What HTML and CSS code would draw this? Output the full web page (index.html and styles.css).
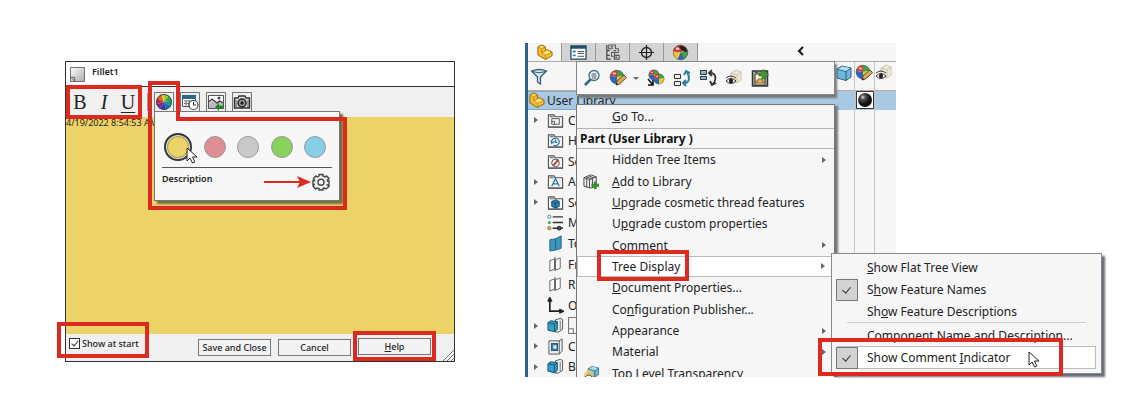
FILE: index.html
```html
<!DOCTYPE html>
<html lang="en">
<head>
<meta charset="utf-8">
<title>Comments and tree display</title>
<link rel="stylesheet" href="styles.css">
</head>
<body>
<svg class="defs" aria-hidden="true">
  <defs>
    <radialGradient id="dark" cx=".35" cy=".3" r=".7"><stop offset="0" stop-color="#ddd"/><stop offset=".25" stop-color="#555"/><stop offset=".7" stop-color="#111"/></radialGradient>
    <linearGradient id="fold" x1="0" y1="0" x2="1" y2="1"><stop offset="0" stop-color="#fff"/><stop offset="1" stop-color="#aaa"/></linearGradient>
  </defs>
  <symbol id="ball" viewBox="0 0 18 18">
    <path d="M9 9L1 8A8 8 0 0 1 9 1Z" fill="#d8372f"/><path d="M9 9V1A8 8 0 0 1 17 8Z" fill="#43a047"/><path d="M9 9L17 8A8 8 0 0 1 9 17Z" fill="#edc52f"/><path d="M9 9V17A8 8 0 0 1 1 8Z" fill="#2867bd"/><circle cx="9" cy="9" r="7.7" fill="none" stroke="#555" stroke-width=".6"/><ellipse cx="6" cy="5" rx="2" ry="1.4" fill="#fff" opacity=".6"/>
  </symbol>
  <symbol id="ballpen" viewBox="0 0 18 18">
    <use href="#ball" width="16" height="16"/><path d="M7 16l1-4 7-6 2.500 2.500-7 6.500z" fill="#d9ae62" stroke="#5c3c1c" stroke-width=".9"/><path d="M7 16l.6-2.200 1.600 1.600z" fill="#222"/>
  </symbol>
  <symbol id="display" viewBox="0 0 18 18">
    <path d="M9 9L1 8A8 8 0 0 1 5 2Z" fill="#d8372f"/><path d="M9 9L5 2A8 8 0 0 1 16 5Z" fill="#c83a32"/><path d="M7 3q5-3 9 3l1 3-5-1z" fill="#222"/><path d="M9 9L17 8A8 8 0 0 1 9 17Z" fill="#43a047"/><path d="M9 9L13 15A8 8 0 0 1 5 16Z" fill="#2867bd"/><path d="M9 9L6 16A8 8 0 0 1 1 8Z" fill="#edc52f"/><circle cx="9" cy="9" r="7.700" fill="none" stroke="#555" stroke-width=".6"/><ellipse cx="6" cy="5" rx="2" ry="1.400" fill="#fff" opacity=".7"/>
  </symbol>
  <symbol id="part" viewBox="0 0 18 18">
    <path d="M2 3l4-2 4 2v4l2-1 5 2.500v4l-7 4-8-5z" fill="#f5bd2c" stroke="#94670b"/><path d="M3 3.500L6 2l3 1.500L6 5zM7 9.500L12 7l4 2-5 3z" fill="#ffe27a"/><path d="M2 3l4 2v4l4 3v4M6 5l4-2M6 9l4-2M10 12l7-3.500" fill="none" stroke="#b98418" stroke-width=".8"/>
  </symbol>
  <symbol id="cube" viewBox="0 0 18 18"><path d="M2 5l5-3 9 2v9l-5 3.500-9-2.500z" fill="#6fb7d6" stroke="#245e7c"/><path d="M2 5l9 2.500L16 4M11 7.500v9" fill="none" stroke="#245e7c"/><path d="M3 5l4.500-2.500L15 4l-4 3z" fill="#b6deed"/></symbol>
  <symbol id="eye" viewBox="0 0 18 18"><path d="M6 4l5-3 5 2v8l-4 3-6-2z" fill="#eee8d5" stroke="#c5bda3" stroke-width=".8"/><path d="M6 4l6 2 4-3M12 6v8" fill="none" stroke="#c5bda3" stroke-width=".8"/><path d="M1 12q5-5 10 0-5 5-10 0z" fill="#fff" stroke="#333"/><circle cx="6" cy="12" r="2.200" fill="#222"/><path d="M1 9q5-4 10 0" fill="none" stroke="#333"/></symbol>
  <symbol id="folder" viewBox="0 0 18 18"><path d="M1.500 16V3h6l1 2h8v11z" fill="#f4f4f4" stroke="#555" stroke-width="1.200"/><path d="M3 5h4M1.500 16h15" stroke="#555"/></symbol>
  <symbol id="body" viewBox="0 0 18 18"><path d="M9 3l5-1.500 2.500 1V13L12 16H9z" fill="#eee" stroke="#555"/><path d="M14 4v10" stroke="#777"/><path d="M1 6l3-2 7 1v8l-3 2.500L1 14z" fill="#399cc8" stroke="#16536f"/><path d="M1 6l7 1.500L11 5M8 7.500v8" fill="none" stroke="#16536f"/></symbol>
  <symbol id="plane" viewBox="0 0 18 18"><path d="M3 5l5-2v11l-5 2zM9 4l5-2v11l-5 2z" fill="#fafafa" stroke="#666"/><path d="M8.500 1v16" stroke="#555" stroke-dasharray="3 1"/></symbol>
  <symbol id="cursor" viewBox="0 0 12 18"><path d="M1 1v13l3-3 2.500 5 2.300-1-2.300-5H11z" fill="#fff" stroke="#222"/></symbol>
  <symbol id="filter" viewBox="0 0 18 18"><path d="M1.500 3q7.500-3 15 0l-6 6v7L7.500 14V9z" fill="#d6e9f1" stroke="#345e75" stroke-width="1.300"/><path d="M2 3.500q7 2.500 14 0" fill="none" stroke="#345e75"/></symbol>
  <symbol id="props" viewBox="0 0 18 18"><path d="M1 2h16v14H1z" fill="#fff" stroke="#234c69" stroke-width="1.400"/><path d="M1 3.500h16" stroke="#234c69" stroke-width="3"/><path d="M3 7h3v2H3zM3 11h3v2H3z" fill="#2686b5"/><path d="M8 8h7M8 10h7M8 13h7" stroke="#444"/></symbol>
  <symbol id="config" viewBox="0 0 18 18"><path d="M5 1h7v4h3v4h-4v3h5v4h-5v-3H8V9h3M5 1v4h5" fill="#eee" stroke="#555" stroke-width="1.200"/><path d="M3 1v15h4M3 7h3M3 12h3" fill="none" stroke="#444" stroke-width="1.300"/><path d="M7 3h3M10 7h3M12 14h2" stroke="#444" stroke-width="1.500"/></symbol>
  <symbol id="target" viewBox="0 0 18 18"><circle cx="9" cy="9" r="5.300" fill="none" stroke="#222" stroke-width="1.400"/><path d="M9 1v16M1 9h16" stroke="#222" stroke-width="1.300"/></symbol>
  <symbol id="zoom" viewBox="0 0 18 18"><path d="M2 16l6-6" stroke="#31677e" stroke-width="2.500"/><circle cx="11" cy="6.500" r="5" fill="#edf7fb" stroke="#426f83" stroke-width="1.300"/><path d="M8.500 5h5M8.500 7h5M9 9h4" stroke="#555"/></symbol>
  <symbol id="balls" viewBox="0 0 18 18"><use href="#ball" width="12" height="12" x="1"/><use href="#ball" width="12" height="12" x="6" y="4"/><path d="M1 10l5 6M6 11v5H1" fill="none" stroke="#111" stroke-width="1.600"/></symbol>
  <symbol id="rollup" viewBox="0 0 18 18"><path d="M1.500 5.500h6v4h-6zM1.500 12.500h6v4h-6z" fill="#eee" stroke="#333"/><path d="M10 14c7 1 7-6 4-11M11 6l2-4 4 2M13 11l-3 3 3 3" fill="none" stroke="#287f9c" stroke-width="1.900"/></symbol>
  <symbol id="rolldown" viewBox="0 0 18 18"><path d="M1.500 1.500h6v4h-6zM1.500 7.500h6v3h-6z" fill="#78bfd6" stroke="#333"/><path d="M10 4c7-1 8 6 4 11M11 12l2 4 4-2M13 1l-3 3 3 3" fill="none" stroke="#333" stroke-width="1.800"/></symbol>
  <symbol id="clip" viewBox="0 0 18 18"><path d="M1.500 2h15v15h-15z" fill="#b5b29b" stroke="#333" stroke-width="1.500"/><path d="M4 5h10v11H4z" fill="#fff7cc" stroke="#333"/><path d="M5 14v-2h2v-2h4v2h2v2z" fill="#efc431" stroke="#755"/><path d="M8 4h3V1h3v3h3v3h-3v3h-3V7H8z" fill="#40a12e" stroke="#225918" stroke-width=".6"/><path d="M4 1h3v3H4z" fill="#555"/></symbol>
  <symbol id="library" viewBox="0 0 18 18"><path d="M1 5l7-3 6 2v10l-6 2-7-2z" fill="#eee" stroke="#444"/><path d="M1 5l6 2 7-3M7 7v9M4 6v9M10 6v10M3 4l6 2M6 3l5 2" fill="none" stroke="#444"/><path d="M13 9v8M9 13h8" stroke="#33902b" stroke-width="3"/></symbol>
</svg>

<main class="board">
  <section class="dialog" aria-label="Fillet1 comment">
    <header class="titlebar">
      <svg class="note-icon" viewBox="0 0 16 16"><path d="M.5.500h15v15H.5z" fill="url(#fold)" stroke="#666"/><path d="M1 11h4v4M2 12l3 3" fill="none" stroke="#555"/></svg>
      <h1>Fillet1</h1>
    </header>
    <div class="toolbar">
      <div class="styles mark">
        <button type="button" aria-label="Bold">B</button><button type="button" class="italic" aria-label="Italic">I</button><button type="button" class="under" aria-label="Underline">U</button>
      </div>
      <span class="divider"></span>
      <div class="tools">
        <button type="button" aria-label="Color"><svg viewBox="0 0 18 18"><path d="M9 9V1l5 1.500z" fill="#9ccc2d"/><path d="M9 9l5-6.500 3 5z" fill="#38a83c"/><path d="M9 9l8-1.500-1 6z" fill="#159c8e"/><path d="M9 9l7 4.500L11 17z" fill="#176bc0"/><path d="M9 9l2 8-6-1z" fill="#343a98"/><path d="M9 9l-4 7-4-5z" fill="#7e2795"/><path d="M9 9l-8 2 1-6z" fill="#c5264c"/><path d="M9 9L2 5l4-4z" fill="#e06323"/><path d="M9 9L6 1h3z" fill="#edce25"/><circle cx="9" cy="9" r="7.500" fill="none" stroke="#444"/></svg></button>
        <button type="button" aria-label="Date and time"><svg viewBox="0 0 18 18"><path d="M1.500 2.500h13v11h-13z" fill="#fff" stroke="#456"/><path d="M1 4h14" stroke="#28688a" stroke-width="4"/><path d="M3 8h9M3 10.500h6M5 7v6M8 7v6" stroke="#777"/><circle cx="12.500" cy="12" r="4.500" fill="#fff" stroke="#444" stroke-width="1.200"/><path d="M12.500 9v3H15" fill="none" stroke="#333"/></svg></button>
        <button type="button" aria-label="Image"><svg viewBox="0 0 18 18"><path d="M1.500 2.500h15v13h-15z" fill="#fff" stroke="#555"/><path d="M2 11l4-4 3 3 3-3 4 4v4H2z" fill="#bbb"/><path d="M2 9l3-3 5 4 3-2 3 2" fill="none" stroke="#333" stroke-width="1.200"/><circle cx="12" cy="5" r="1.500" fill="#444"/><path d="M8 14l4-4v2.500h5v3h-5V18z" fill="#25862d"/></svg></button>
        <button type="button" aria-label="Camera"><svg viewBox="0 0 18 18"><path d="M1.500 5H5l1-2h6l1 2h3.500v10h-15z" fill="#ddd" stroke="#333" stroke-width="1.400"/><circle cx="9" cy="10" r="4" fill="#999" stroke="#222" stroke-width="1.500"/><circle cx="9" cy="10" r="1.700" fill="#222"/><path d="M3 7v7M15 7v7" stroke="#555"/></svg></button>
      </div>
      <div class="popover">
        <div class="swatches">
          <button type="button" class="swatch yellow" aria-label="Yellow"></button><button type="button" class="swatch pink" aria-label="Pink"></button><button type="button" class="swatch gray" aria-label="Gray"></button><button type="button" class="swatch green" aria-label="Green"></button><button type="button" class="swatch blue" aria-label="Blue"></button>
          <svg class="cursor"><use href="#cursor"/></svg>
        </div>
        <div class="description">
          <span>Description</span>
          <svg class="arrow" viewBox="0 0 47 12"><path d="M0 6h36" stroke="#dc2a20" stroke-width="2"/><path d="M33 0l14 6-14 6 3-6z" fill="#dc2a20"/></svg>
          <button type="button" aria-label="Settings"><svg viewBox="0 0 18 18"><path d="M7 3V1.500h4V3l2 1 1.500-1L17 5.500 15.500 7v1H17v4h-1.500L17 13.500 14 16l-2-1-1 .5V17H7v-1.500L5 15l-1.500 1L1 13l1-1.500H1v-4h1.500L1.500 5.500 4 3l1.500 1z" fill="#eee" stroke="#444" stroke-width="1.400"/><circle cx="9" cy="9.300" r="3" fill="#fff" stroke="#444" stroke-width="1.400"/></svg></button>
        </div>
        <svg class="callout" viewBox="0 0 199 129"><path d="M2 2h28v36h167v89H2z" fill="none" stroke="#dc2a20" stroke-width="4"/></svg>
      </div>
    </div>
    <div class="comment">4/19/2022 8:54:53 AM</div>
    <footer class="footer">
      <label class="start mark"><input type="checkbox" checked><span>Show at start</span></label>
      <div class="actions"><button type="button" class="save">Save and Close</button><button type="button">Cancel</button><span class="help mark"><button type="button"><u>H</u>elp</button></span></div>
      <svg class="grip" viewBox="0 0 12 12"><path d="M1 12L12 1M5 12l7-7M9 12l3-3" stroke="#777"/></svg>
    </footer>
  </section>

  <section class="workspace" aria-label="Feature manager">
    <div class="manager">
      <nav class="tabs">
        <button type="button" class="current" aria-label="Features"><svg><use href="#part"/></svg></button><button type="button" aria-label="Properties"><svg><use href="#props"/></svg></button><button type="button" aria-label="Configurations"><svg><use href="#config"/></svg></button><button type="button" aria-label="Dimensions"><svg><use href="#target"/></svg></button><button type="button" aria-label="Display"><svg><use href="#display"/></svg></button>
        <button type="button" class="collapse" aria-label="Collapse"><svg viewBox="0 0 8 10"><path d="M6 1L2 5l4 4" fill="none" stroke="#111" stroke-width="2"/></svg></button>
      </nav>
      <div class="filter"><svg><use href="#filter"/></svg></div>
      <div class="root"><svg><use href="#part"/></svg><span>User Library</span></div>
      <ul class="tree">
        <li class="open"><svg viewBox="0 0 18 18"><use href="#folder"/><path d="M5 7h8v6H5zM5 10h3v3" fill="none" stroke="#555"/></svg>Comments</li>
        <li><svg viewBox="0 0 18 18"><use href="#folder"/><path d="M5 10a4 4 0 1 1 2 4M4 9l1 3 3-2M9 8v3h2" fill="none" stroke="#297c9d" stroke-width="1.300"/></svg>History</li>
        <li><svg viewBox="0 0 18 18"><use href="#folder"/><circle cx="9" cy="10.500" r="4" fill="#fff" stroke="#444"/><path d="M7 13l5-6" stroke="#c53029" stroke-width="2"/></svg>Sensors</li>
        <li class="open"><svg viewBox="0 0 18 18"><use href="#folder"/><path d="M5 14l4-8 4 8M6.500 11.500h5" fill="none" stroke="#25799d" stroke-width="1.300"/></svg>Annotations</li>
        <li class="open"><svg viewBox="0 0 18 18"><use href="#folder"/><path d="M5 8l4-2 4 2v5l-4 2-4-2z" fill="#2382ae" stroke="#14516d"/><path d="M5 8l4 2 4-2M9 10v5" fill="none" stroke="#14516d"/></svg>Solid Bodies</li>
        <li><svg viewBox="0 0 18 18"><path d="M6 3h11M6 9h11M6 15h11" stroke="#333" stroke-width="1.500"/><circle cx="2.500" cy="3" r="1.700" fill="#fff" stroke="#278ba6"/><circle cx="2.500" cy="9" r="1.700" fill="#61a54f"/><circle cx="2.500" cy="15" r="1.700" fill="#eac34a" stroke="#765"/><circle cx="13" cy="15" r="2" fill="#555" stroke="#111"/></svg>Material</li>
        <li><svg viewBox="0 0 18 18"><path d="M3 5l6-1v12l-6 1zM9 4l6-3v13l-6 2z" fill="#3d96bd" stroke="#246585"/></svg>Top Plane</li>
        <li><svg><use href="#plane"/></svg>Front Plane</li>
        <li><svg><use href="#plane"/></svg>Right Plane</li>
        <li><svg viewBox="0 0 18 18"><path d="M3 3v12h12M1 5l2-4 2 4M13 13l4 2-4 2" fill="none" stroke="#222" stroke-width="1.800"/></svg>Origin</li>
        <li class="open"><svg><use href="#body"/></svg><svg class="small-note" viewBox="0 0 16 16"><path d="M.5.500h15v15H.5zM1 11h4v4" fill="#f5f5f5" stroke="#777"/></svg></li>
        <li class="open"><svg viewBox="0 0 18 18"><path d="M2 3h11l3-2v13l-3 3H2zM13 3v14" fill="#eee" stroke="#555"/><path d="M5 6h6v7H5z" fill="#54a4c7" stroke="#245e7c" stroke-width="1.500"/><path d="M7 8h3v3H7z" fill="#e9f6fb"/></svg>Cut-Extrude1</li>
        <li class="open"><svg><use href="#body"/></svg>Boss-Extrude1</li>
      </ul>
      <div class="display">
        <div class="cell"><svg><use href="#cube"/></svg><i></i></div>
        <div class="cell"><svg><use href="#ballpen"/></svg><i><svg viewBox="0 0 18 18"><path d="M.5.500h17v17H.5z" fill="#fff" stroke="#333"/><circle cx="9" cy="9" r="7" fill="url(#dark)"/></svg></i></div>
        <div class="cell"><svg><use href="#eye"/></svg><i></i></div>
      </div>
      <div class="menu">
        <button type="button" class="goto"><span><u>G</u>o To...</span></button>
        <h2>Part (User Library )</h2>
        <div class="items">
          <button type="button" class="more">Hidden Tree Items</button>
          <button type="button"><svg><use href="#library"/></svg><span><u>A</u>dd to Library</span></button>
          <button type="button"><span><u>U</u>pgrade cosmetic thread features</span></button>
          <button type="button"><span>U<u>p</u>grade custom properties</span></button>
          <button type="button" class="more">Comment</button>
          <button type="button" class="more active"><span class="mark">Tree Display</span></button>
          <button type="button"><span><u>D</u>ocument Properties...</span></button>
          <button type="button"><span>Co<u>n</u>figuration Publisher...</span></button>
          <button type="button" class="more">Appearance</button>
          <button type="button" class="more">Material</button>
          <button type="button"><svg viewBox="0 0 18 18"><use href="#cube" width="14" height="14" x="4"/><path d="M1 9l5-4 5 3v9H1z" fill="#efc964" opacity=".8"/><path d="M2 13q4-5 8 0-4 4-8 0z" fill="#fff" stroke="#333"/></svg><span>Top Level Transparency</span></button>
        </div>
      </div>
      <div class="quickbar">
        <button type="button" aria-label="Zoom to selection"><svg><use href="#zoom"/></svg></button>
        <button type="button" class="drop" aria-label="Appearances"><svg><use href="#ballpen"/></svg></button>
        <button type="button" aria-label="Copy appearance"><svg><use href="#balls"/></svg></button>
        <button type="button" aria-label="Roll up"><svg><use href="#rollup"/></svg></button>
        <button type="button" aria-label="Roll down"><svg><use href="#rolldown"/></svg></button>
        <button type="button" aria-label="Visibility"><svg><use href="#eye"/></svg></button>
        <button type="button" aria-label="Selection set"><svg><use href="#clip"/></svg></button>
      </div>
    </div>
    <div class="submenu">
      <button type="button"><span><u>S</u>how Flat Tree View</span></button>
      <button type="button" class="checked"><span>S<u>h</u>ow Feature Names</span></button>
      <button type="button"><span>Sh<u>o</u>w Feature Descriptions</span></button>
      <hr>
      <button type="button"><span><u>C</u>omponent Name and Description...</span></button>
      <button type="button" class="checked chosen mark"><span>Show Comment <u>I</u>ndicator</span><svg class="cursor"><use href="#cursor"/></svg></button>
    </div>
  </section>
</main>
</body>
</html>
```
FILE: styles.css
```css
* { box-sizing: border-box; }
body { margin: 0; background: #fff; color: #222; font-family: "Noto Sans", "Open Sans", sans-serif; font-size: 12px; }
button { margin: 0; padding: 0; border: 0; background: none; color: inherit; font: inherit; text-align: left; }
svg { display: block; flex: none; width: 18px; height: 18px; }
.defs { position: absolute; width: 0; height: 0; }
.board { display: grid; grid-template-columns: 390fr 577fr; column-gap: 70px; align-items: start; padding: 43px 23px 43px 65px; }

.mark { position: relative; }
.mark::after { content: ""; position: absolute; inset: 0; border: 4px solid #dc2a20; pointer-events: none; z-index: 2; }

.dialog { margin-top: 18px; border: 1px solid #333; background: #f0f0f0; font-size: 9px; }
.titlebar { display: flex; align-items: center; gap: 7px; height: 25px; padding-left: 4px; border-bottom: 1px solid #333; background: #fff; }
.note-icon { width: 15px; height: 15px; margin-top: 1px; }
.titlebar h1 { margin: 0 0 6px; font-size: 9px; font-weight: 600; }
.toolbar { position: relative; display: flex; align-items: center; height: 30px; }
.styles { display: flex; justify-content: space-around; width: 76px; height: 34px; align-items: center; font-family: "Liberation Serif", serif; font-size: 20px; padding: 0 2px; }
.styles button { width: 20px; text-align: center; line-height: 24px; }
.styles .italic { font-style: italic; }
.styles .under { text-decoration: underline; text-decoration-thickness: 1px; text-underline-offset: 3px; }
.divider { width: 1px; height: 18px; margin: 0 6px 0 5px; background: #999; }
.tools { display: flex; gap: 6px; }
.tools button { width: 20px; height: 20px; border: 1px solid #777; background: #eee; }
.popover { position: absolute; z-index: 3; top: 24px; left: 88px; width: 186px; height: 90px; padding: 24px 7px 0; border: 1px solid #777; background: #f7f7f7; box-shadow: 3px 3px 2px #756b43; }
.swatches { position: relative; display: flex; align-items: center; justify-content: space-between; height: 32px; padding: 0 6px; margin-top: -5px; }
.swatch { width: 22px; height: 22px; border: 1px solid #999; border-radius: 50%; }
.swatches .yellow { width: 28px; height: 28px; margin-left: -4px; border: 2px solid #333845; background: #ecd367; box-shadow: inset 0 0 0 1px #f3eac2, inset 0 0 0 2px #a89c64; }
.pink { background: #df8f93; }
.gray { background: #c9c9c9; }
.green { background: #87d35c; }
.blue { background: #86cfe7; }
.cursor { position: absolute; width: 12px; height: 18px; }
.swatches .cursor { left: 24px; top: 16px; }
.description { display: flex; align-items: center; height: 28px; margin-top: 4px; border-top: 1px solid #555; font-weight: 600; }
.description > span { flex: 1; padding-bottom: 6px; }
.description button { margin-right: 2px; }
.description .arrow { width: 47px; height: 12px; margin-right: 1px; }
.callout { position: absolute; top: -31px; left: -7px; width: 199px; height: 129px; pointer-events: none; }
.comment { height: 217px; background: #ecd367; line-height: 12px; }
.footer { position: relative; display: flex; align-items: center; justify-content: space-between; height: 27px; padding-right: 18px; }
.start { display: flex; align-items: center; gap: 2px; width: 92px; height: 36px; margin: -15px 0 0 -9px; padding: 7px 0 0 12px; font-weight: 500; }
.start input { position: relative; appearance: none; width: 11px; height: 11px; margin: 0; border: 1px solid #333; background: #fff; }
.start input:checked::after { content: ""; position: absolute; left: 3px; top: 0; width: 3px; height: 6px; border: solid #333; border-width: 0 1px 1px 0; transform: rotate(40deg); }
.actions { display: flex; align-items: center; gap: 7px; }
.actions button { width: 73px; height: 17px; border: 1px solid #777; background: #f3f3f3; text-align: center; font-weight: 500; line-height: 14px; }
.help { margin: -3px 0 0 -5px; padding: 7px 5px 6px; }
.grip { position: absolute; right: 0; bottom: 0; width: 12px; height: 12px; }

.workspace { position: relative; }
.manager { position: relative; width: 371px; height: 334px; overflow: hidden; border-left: 3px solid #2a6496; background: #f6f6f6; }
.tabs { display: flex; height: 19px; border-bottom: 1px solid #aaa; }
.tabs button { display: flex; align-items: center; justify-content: center; width: 34px; border-right: 1px solid #999; background: #d3d3d3; overflow: hidden; }
.tabs .current { background: #f6f6f6; }
.tabs .collapse { border: 0; background: none; margin-left: 86px; padding-bottom: 2px; }
.tabs svg { width: 17px; height: 17px; }
.tabs .collapse svg { width: 8px; height: 10px; }
.filter { height: 29px; padding: 6px 2px; border-bottom: 1px solid #c4a795; }
.root { display: flex; align-items: center; gap: 2px; height: 19px; background: #a9c9e3; border: 1px solid #80abd0; border-width: 1px 0; font-size: 12px; }
.root svg { width: 17px; height: 17px; }
.tree { display: grid; grid-template-rows: repeat(13, 1fr); height: 267px; margin: 0; padding: 0; list-style: none; font-size: 12px; }
.tree li { display: flex; align-items: center; gap: 4px; padding-left: 19px; white-space: nowrap; }
.tree svg { width: 17px; height: 17px; }
.open::before, .more::after { content: ""; border: solid transparent; border-width: 3px 0 3px 4px; border-left-color: #666; }
.open::before { margin: 0 5px 0 -13px; }
.display { position: absolute; top: 19px; right: 0; bottom: 0; display: grid; grid-template-columns: 20px 20px 21px; }
.cell { border-right: 1px solid #c4c4c4; padding-top: 2px; }
.cell:last-child { border-right: 0; }
.cell > i { display: flex; justify-content: center; height: 19px; margin-top: 9px; background: #a9c9e3; }
.menu { position: absolute; top: 61px; left: 48px; width: 259px; height: 290px; border: 1px solid #777; background: #f6f6f6; box-shadow: 3px 2px 2px #777; }
.menu button { display: flex; align-items: center; width: 100%; padding-left: 35px; white-space: nowrap; }
.menu .goto { height: 23px; }
.menu h2 { height: 21px; margin: 0; padding-left: 3px; border: solid #b5b5b5; border-width: 1px 0; font-size: 12px; line-height: 20px; color: #111; }
.items { display: grid; grid-template-rows: repeat(11, 1fr); height: 235px; }
.items button > svg { width: 17px; height: 17px; margin: 0 12px 0 -29px; }
.more::after { margin: 0 8px 0 auto; }
.items .active { border: 1px solid #bbb; background: #fff; padding-left: 34px; }
.active .mark::after { inset: -8px -9px -6px -15px; }
.quickbar { position: absolute; top: 18px; left: 48px; display: flex; align-items: center; gap: 8px; width: 259px; height: 34px; padding-left: 6px; border: 1px solid #888; background: #f7f7f7; box-shadow: 2px 3px 2px #777; }
.drop { display: flex; align-items: center; gap: 6px; }
.drop::after { content: ""; border: solid transparent; border-width: 3px 3px 0; border-top-color: #666; }
.submenu { position: absolute; top: 210px; left: 306px; right: 0; padding: 3px 5px 4px; border: 1px solid #888; background: #f6f6f6; box-shadow: 3px 3px 2px #666c78; }
.submenu button { position: relative; display: flex; align-items: center; width: 100%; height: 21px; padding-left: 30px; white-space: nowrap; }
.submenu .checked { height: 23px; }
.submenu .checked::before { content: ""; position: absolute; left: -1px; top: 1px; width: 20px; height: 20px; border: 1px solid #777; background: #d2d2d2; }
.submenu .checked > span::before { content: ""; position: absolute; left: 7px; top: 7px; width: 4px; height: 7px; border: solid #333; border-width: 0 1px 1px 0; transform: rotate(40deg); }
.submenu hr { height: 1px; margin: 0 10px 2px; border: 0; background: #ccc; }
.submenu .chosen { background: #fff; box-shadow: inset 0 0 0 1px #bbb; }
.submenu .chosen::after { inset: -8px 33px -7px -19px; }
.submenu .cursor { left: 191px; top: 5px; }
```
